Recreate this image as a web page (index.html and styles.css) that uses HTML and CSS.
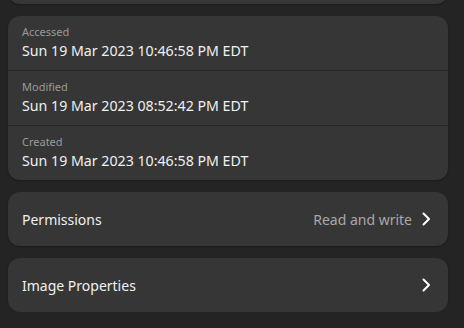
FILE: index.html
```html
<!DOCTYPE html>
<html lang="en">
  <head>
    <meta charset="UTF-8" />
    <meta name="viewport" content="width=device-width, initial-scale=1.0" />
    <title>Properties</title>
    <link rel="stylesheet" href="styles.css">
  </head>
  <body>
    <div class="page">
      <div class="card card-cut"></div>

      <div class="card">
        <div class="info-row">
          <div class="info-label">Accessed</div>
          <div class="info-value">Sun 19 Mar 2023 10:46:58 PM EDT</div>
        </div>
        <div class="info-row">
          <div class="info-label">Modified</div>
          <div class="info-value">Sun 19 Mar 2023 08:52:42 PM EDT</div>
        </div>
        <div class="info-row">
          <div class="info-label">Created</div>
          <div class="info-value">Sun 19 Mar 2023 10:46:58 PM EDT</div>
        </div>
      </div>

      <div class="card link-row">
        <span class="link-title">Permissions</span>
        <span class="link-value">Read and write</span>
        <svg class="chevron" width="16" height="16" viewBox="0 0 16 16">
          <path d="M5.5 2.5 L11 8 L5.5 13.5" fill="none" stroke="#ffffff" stroke-width="2" stroke-linecap="round" stroke-linejoin="round" />
        </svg>
      </div>

      <div class="card link-row">
        <span class="link-title">Image Properties</span>
        <svg class="chevron" width="16" height="16" viewBox="0 0 16 16">
          <path d="M5.5 2.5 L11 8 L5.5 13.5" fill="none" stroke="#ffffff" stroke-width="2" stroke-linecap="round" stroke-linejoin="round" />
        </svg>
      </div>
    </div>
  </body>
</html>
```

FILE: styles.css
```css
body {
  margin: 0;
  background-color: #242424;
  font-family: "Noto Sans", sans-serif;
  color: #f0f0f0;
  overflow: hidden;
}

.page {
  width: 440px;
  padding: 0 8px;
  display: flex;
  flex-direction: column;
  gap: 12px;
}

.card {
  background-color: #363636;
  border-radius: 12px;
  box-shadow: 0 1px 2px rgba(0, 0, 0, 0.25);
}

/* the card above, scrolled mostly out of view */
.card-cut {
  height: 40px;
  margin-top: -36px;
}

.info-row {
  height: 54px;
  padding: 0 14px;
  display: flex;
  flex-direction: column;
  justify-content: center;
  border-top: 1px solid #262626;
}

.info-row:first-child {
  border-top: none;
}

.info-label {
  font-size: 11px;
  color: #9a9a9a;
  line-height: 15px;
  margin-top: -1px;
}

.info-value {
  font-size: 14.2px;
  line-height: 20px;
  margin-top: 2px;
}

.link-row {
  height: 54px;
  padding: 0 14px;
  display: flex;
  align-items: center;
  font-size: 14px;
}

.link-title {
  flex: 1;
}

.link-value {
  color: #a8a8a8;
  margin-right: 6px;
}

.chevron {
  display: block;
}
```
